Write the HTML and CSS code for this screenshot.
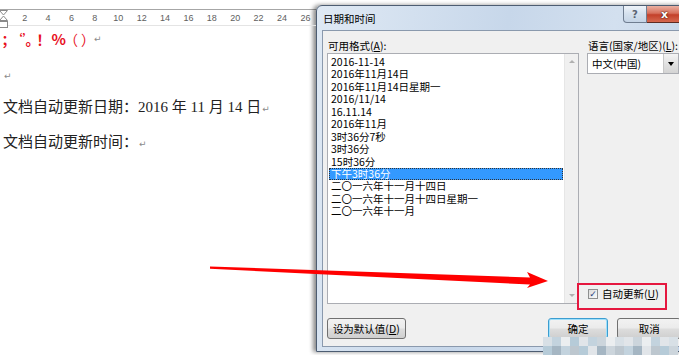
FILE: index.html
```html
<!DOCTYPE html>
<html lang="zh-CN">
<head>
  <meta charset="UTF-8" />
  <title>日期和时间</title>
  <link rel="stylesheet" href="styles.css">
</head>
<body>
  <div class="doc">
    <div class="topline"></div>
    <div class="ruler">
      <svg class="indent" width="9" height="20" viewBox="0 0 9 20">
        <path d="M0.5 0.5 H8.5 L4.5 5 Z M4.5 6 L8.5 10.5 H0.5 Z" fill="#fff" stroke="#8a8a8a"/>
        <rect x="0.5" y="11.5" width="8" height="6" fill="#fff" stroke="#8a8a8a"/>
      </svg>
      <span>2</span><span>4</span><span>6</span><span>8</span><span>10</span><span>12</span><span>14</span>
      <span>16</span><span>18</span><span>20</span><span>22</span><span>24</span><span>26</span>
    </div>
    <p class="punct"><span class="g1">；</span><span class="g2">‘’</span><span class="g3">。</span><span class="g4">！</span><span class="g5">%</span><span class="g6">（</span><span class="g7">）</span><span class="pm">↵</span></p>
    <p class="empty"><span class="pm">↵</span></p>
    <p class="line first">文档自动更新日期：2016 年 11 月 14 日<span class="pm">↵</span></p>
    <p class="line">文档自动更新时间：<span class="pm">↵</span></p>
  </div>

  <div class="dialog">
    <div class="titlebar">
      <span class="title">日期和时间</span>
      <div class="caption">
        <span class="help">?</span>
        <span class="close">x</span>
      </div>
    </div>
    <div class="client">
      <div class="cols">
        <div class="left">
          <div class="label">可用格式(<u>A</u>):</div>
          <div class="listbox">
            <ul>
              <li>2016-11-14</li>
              <li>2016年11月14日</li>
              <li>2016年11月14日星期一</li>
              <li>2016/11/14</li>
              <li>16.11.14</li>
              <li>2016年11月</li>
              <li>3时36分7秒</li>
              <li>3时36分</li>
              <li>15时36分</li>
              <li class="sel">下午3时36分</li>
              <li>二〇一六年十一月十四日</li>
              <li>二〇一六年十一月十四日星期一</li>
              <li>二〇一六年十一月</li>
            </ul>
            <div class="scroll">
              <span class="up"></span>
              <span class="down"></span>
            </div>
          </div>
        </div>
        <div class="right">
          <div class="label">语言(国家/地区)(<u>L</u>):</div>
          <div class="combo">
            <span class="value">中文(中国)</span>
            <span class="drop"><i></i></span>
          </div>
          <div class="auto">
            <span class="check">✓</span>
            <span>自动更新(<u>U</u>)</span>
          </div>
        </div>
      </div>
      <div class="buttons">
        <button class="btn btn-default-val">设为默认值(<u>D</u>)</button>
        <button class="btn btn-ok">确定</button>
        <button class="btn btn-cancel">取消</button>
      </div>
    </div>
  </div>

  <svg class="arrow" width="679" height="355" viewBox="0 0 679 355">
    <polygon points="210,266.5 530,277.5 527,272 548,281 527,288 530,284.5 210,268.8" fill="#f00"/>
  </svg>
  <div class="mark"></div>

  <div class="mosaic">
    <span class="a"></span><span class="b"></span><span class="c"></span><span class="d"></span><span class="e"></span>
    <span class="b"></span><span class="f"></span><span class="c"></span><span class="a"></span><span class="e"></span>
    <span class="f"></span><span class="c"></span><span class="b"></span><span class="e"></span><span class="a"></span>
    <span class="d"></span><span class="g"></span><span class="b"></span><span class="h"></span><span class="d"></span>
    <span class="e"></span><span class="g"></span><span class="f"></span><span class="h"></span><span class="b"></span>
    <span class="g"></span><span class="e"></span><span class="h"></span><span class="d"></span><span class="f"></span>
  </div>
</body>
</html>
```

FILE: styles.css
```css
* {
  box-sizing: border-box;
}

html, body {
  margin: 0;
}

body {
  width: 679px;
  height: 355px;
  overflow: hidden;
  position: relative;
  display: flex;
  background: #fff;
  font-family: "Noto Sans CJK SC", sans-serif;
  color: #000;
}

/* ---------- document behind the dialog ---------- */

.doc {
  width: 316px;
  flex: none;
}

.topline {
  height: 10px;
  border-bottom: 1px solid #a6a6a6;
}

.ruler {
  position: relative;
  height: 16px;
  display: flex;
  align-items: center;
  padding-left: 13px;
  border-bottom: 1px solid #e4e4e4;
  font: 9px "Liberation Sans", sans-serif;
  color: #5e5e5e;
}

.ruler span {
  width: 23.4px;
  flex: none;
  text-align: center;
}

.indent {
  position: absolute;
  left: -1px;
  top: 0;
}

.doc p {
  margin: 0;
  padding-left: 3px;
  white-space: nowrap;
}

/* red punctuation row, compressed like Word does */
.punct {
  margin-top: 4px !important;
  height: 18px;
  line-height: 18px;
  display: flex;
  padding-left: 0 !important;
  font-size: 14px;
  font-weight: bold;
  color: #e8101e;
  font-feature-settings: "halt";
}

.punct span {
  display: block;
  flex: none;
  text-align: center;
  white-space: nowrap;
}

.punct .g1 { width: 10px; }
.punct .g2 { width: 9px; margin-left: 6.5px; font-size: 12px; }
.punct .g3 { width: 6px; }
.punct .g4 { width: 10px; margin-left: 3.5px; }
.punct .g5 { width: 14px; margin-left: 6.5px; font-size: 15px; }
.punct .g6 { width: 8px; margin-left: 5px; font-weight: normal; }
.punct .g7 { width: 8px; margin-left: 2px; font-weight: normal; }
.punct .pm { margin-left: 5.5px; }

.empty {
  margin-top: 15px !important;
  height: 18px;
  line-height: 18px;
}

.line {
  height: 35px;
  line-height: 35px;
  font-family: "Liberation Serif", "Noto Sans CJK SC", serif;
  font-size: 15px;
  color: #222;
}

.line.first {
  margin-top: 8.5px;
}

.pm {
  font-family: "DejaVu Sans", sans-serif;
  font-size: 9px;
  font-weight: normal;
  color: #8a8a8a;
  margin-left: 1px;
}

/* ---------- dialog window ---------- */

.dialog {
  width: 372px;
  height: 347px;
  margin-top: 5px;
  flex: none;
  display: flex;
  flex-direction: column;
  border: 1px solid #4d5d72;
  border-radius: 6px 6px 0 0;
  background: linear-gradient(100deg, #dfe9f4, #c7d7ea 45%, #d3e0ef 70%, #bdd0e6);
  box-shadow: -3px 0 4px rgba(0, 0, 0, 0.45);
}

.titlebar {
  height: 24px;
  display: flex;
  justify-content: space-between;
  padding-left: 6px;
}

.title {
  align-self: center;
  font-size: 10.5px;
  line-height: 14px;
  margin-top: 1px;
}

.caption {
  display: flex;
  margin-right: 4px;
  height: 17px;
}

.caption span {
  display: flex;
  align-items: center;
  justify-content: center;
  font-family: "DejaVu Sans", sans-serif;
  font-weight: bold;
  height: 17px;
}

.help {
  width: 24px;
  border: 1px solid #6f7d90;
  border-top: none;
  border-radius: 0 0 0 4px;
  background: linear-gradient(#eef3f9, #d4e0ed 50%, #c5d4e6);
  color: #5a6372;
  font-size: 10px;
}

.close {
  width: 36px;
  border: 1px solid #5e2b22;
  border-top: none;
  border-left: none;
  border-radius: 0 0 4px 0;
  background: linear-gradient(#eab0a2, #d7705c 45%, #c3402a 55%, #d5684f);
  color: #fff;
  font-size: 11px;
  text-shadow: 0 0 2px #4a1810, 0 0 1px #4a1810;
}

.client {
  flex: 1;
  margin: 0 5px 4px 5px;
  border: 1px solid #8a99ad;
  background: #f0f0f0;
  padding: 8px 0 0 4px;
  font-size: 10.5px;
}

.cols {
  display: flex;
  gap: 8px;
}

.label {
  height: 14px;
  line-height: 14px;
  padding-left: 1px;
  white-space: nowrap;
}

.left {
  width: 252px;
  flex: none;
}

.listbox {
  height: 251px;
  display: flex;
  border: 1px solid #abadb3;
  background: #fff;
}

.listbox ul {
  flex: 1;
  margin: 0;
  padding: 2px 1px 0 1px;
  list-style: none;
}

.listbox li {
  height: 12.45px;
  line-height: 12.45px;
  padding-left: 2px;
  white-space: nowrap;
}

.listbox li.sel {
  background: #3399ff;
  color: #fff;
  outline: 1px dotted #333;
  outline-offset: -1px;
}

.scroll {
  width: 14px;
  display: flex;
  flex-direction: column;
  justify-content: space-between;
  align-items: center;
  padding: 6px 0;
  background: #f0f0f0;
  border-left: 1px solid #e6e6e6;
}

.scroll span {
  width: 0;
  height: 0;
  border-left: 3px solid transparent;
  border-right: 3px solid transparent;
}

.scroll .up {
  border-bottom: 3px solid #b0b0b0;
}

.scroll .down {
  border-top: 3px solid #b0b0b0;
}

.right {
  flex: 1;
  display: flex;
  flex-direction: column;
  padding-right: 2px;
}

.combo {
  height: 21px;
  display: flex;
  border: 1px solid #abadb3;
  background: #fff;
}

.combo .value {
  flex: 1;
  line-height: 19px;
  padding-left: 4px;
}

.combo .drop {
  width: 15px;
  display: flex;
  align-items: center;
  justify-content: center;
  border-left: 1px solid #c8c8c8;
  background: linear-gradient(#f4f4f4, #e2e2e2 50%, #d4d4d4);
}

.combo .drop i {
  border-left: 3px solid transparent;
  border-right: 3px solid transparent;
  border-top: 4px solid #000;
}

.auto {
  margin-top: auto;
  margin-bottom: 3px;
  display: flex;
  align-items: center;
  gap: 4px;
  padding-left: 1px;
  line-height: 14px;
}

.check {
  width: 10px;
  height: 10px;
  display: flex;
  align-items: center;
  justify-content: center;
  border: 1px solid #8e8f8f;
  background: linear-gradient(135deg, #dcdcdc, #fafafa);
  color: #2c3f7c;
  font-family: "DejaVu Sans", sans-serif;
  font-size: 9px;
  font-weight: bold;
}

.buttons {
  display: flex;
  margin-top: 14px;
}

.btn {
  height: 21px;
  padding: 0;
  border: 1px solid #707070;
  border-radius: 3px;
  background: linear-gradient(#f2f2f2, #ebebeb 48%, #dddddd 52%, #cfcfcf);
  font-family: "Noto Sans CJK SC", sans-serif;
  font-size: 10.5px;
  color: #000;
  line-height: 19px;
}

.btn-default-val {
  width: 79px;
}

.btn-ok {
  width: 61px;
  margin-left: 142px;
  border-color: #3c9dd0;
  box-shadow: inset 0 0 0 1px #9fe0fb;
}

.btn-cancel {
  width: 64px;
  margin-left: 9px;
}

/* ---------- annotations over the screenshot ---------- */

.arrow {
  position: absolute;
  left: 0;
  top: 0;
  pointer-events: none;
}

.mark {
  position: absolute;
  left: 577px;
  top: 283px;
  width: 90px;
  height: 27px;
  border: 2px solid #e5173f;
}

.mosaic {
  position: absolute;
  left: 543px;
  top: 337px;
  display: grid;
  grid-template-columns: repeat(15, 9px);
  grid-auto-rows: 9px;
}

.mosaic .a { background: #d8e0e6; }
.mosaic .b { background: #c3d3de; }
.mosaic .c { background: #ebeef0; }
.mosaic .d { background: #b6cbd8; }
.mosaic .e { background: #e1e5e9; }
.mosaic .f { background: #ccd5dc; }
.mosaic .g { background: #a5b6c3; }
.mosaic .h { background: #bdc7cf; }
```
